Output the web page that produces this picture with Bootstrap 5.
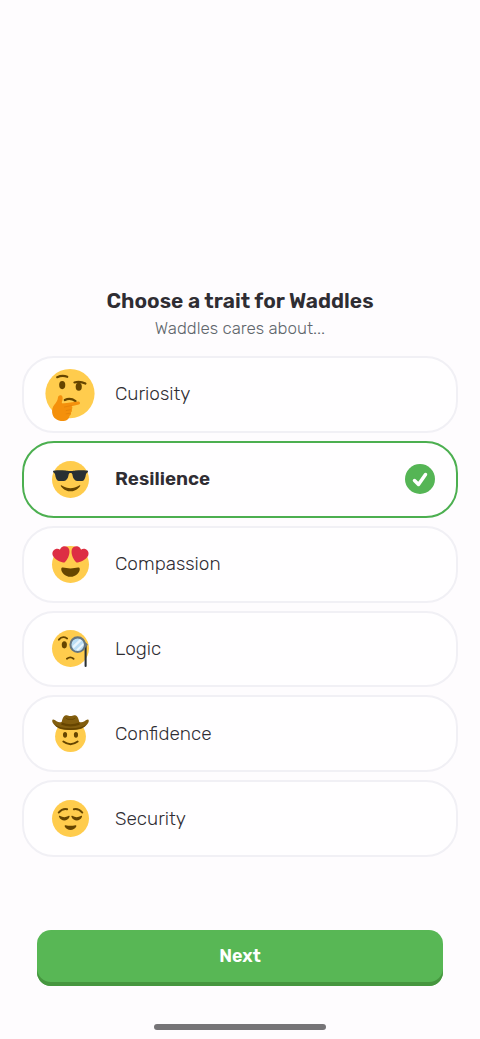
<!DOCTYPE html>
<html lang="en">
<head>
<meta charset="utf-8">
<meta name="viewport" content="width=device-width, initial-scale=1">
<title>Choose a trait</title>
<link href="https://cdn.jsdelivr.net/npm/bootstrap@5.3.0/dist/css/bootstrap.min.css" rel="stylesheet">
<style>
  body { background: #fefcfe; color: #2f2d33; font-family: Rubik, Inter, "Liberation Sans", sans-serif; }
  .screen { padding: 286px 22px 9px; }
  .screen-title { font-size: 21px; line-height: 30px; font-weight: 650; }
  .screen-sub { font-size: 17px; line-height: 24px; font-weight: 300; color: #60666c; }
  .trait-list { display: grid; grid-auto-rows: 1fr; min-height: 501px; margin-top: 16px; }
  .trait { background: #fffeff; border: 2px solid #f1f0f5; border-radius: 32px; padding: 0 21px; font-size: 19px; line-height: 24px; font-weight: 350; cursor: pointer; }
  .trait-icon { width: 50px; height: 50px; margin-right: 20px; }
  .trait-icon svg { width: 37px; height: 37px; overflow: visible; }
  .trait-icon .large { width: 50px; height: 50px; }
  .tick { width: 30px; height: 30px; display: none; }
  .btn-check:checked + .trait { border-color: #4caf50; font-weight: 600; }
  .btn-check:checked + .trait .tick { display: block; }
  .btn-check:focus-visible + .trait { outline: 2px solid #2f2d33; }
  .btn-next, .btn-next:hover, .btn-next:active { background: #58b755; color: #fff; }
  .btn-next { border: 0; border-radius: 14px; box-shadow: inset 0 -4px #46963f; font-size: 18px; line-height: 24px; font-weight: 600; padding: 14px 16px 18px; }
  .footer-bar { padding: 0 15px; }
  .home-bar { width: 172px; height: 6px; border-radius: 3px; background: #767477; margin-top: 38px; }
</style>
</head>
<body>
<main class="screen min-vh-100 d-flex flex-column">
  <header class="text-center">
    <h1 class="screen-title mb-0">Choose a trait for Waddles</h1>
    <p class="screen-sub mb-0">Waddles cares about...</p>
  </header>

  <form class="d-flex flex-column flex-grow-1">
    <div class="trait-list gap-2" role="radiogroup" aria-label="Trait">
      <div class="d-flex">
        <input class="btn-check" type="radio" name="trait" id="curiosity">
        <label class="trait d-flex align-items-center w-100" for="curiosity">
          <span class="trait-icon d-flex align-items-center justify-content-center">
            <svg class="large" viewBox="0 0 36 36" aria-hidden="true">
              <circle cx="18" cy="17.700" r="17.700" fill="#ffcc4d"/>
              <ellipse cx="12.400" cy="11.600" rx="2.200" ry="2.900" fill="#664500"/>
              <ellipse cx="24.300" cy="12.800" rx="2.200" ry="2.900" fill="#664500"/>
              <path d="M8.800 5.900q3.700-1.700 7.200-.3M21.200 9.700q4-1.200 7.900.8M14.300 22.300q3.900-1.900 7.700.8" fill="none" stroke="#664500" stroke-width="1.600" stroke-linecap="round"/>
              <path fill="#f4900c" d="M11 18.900c1.100-.2 1.700.7 1.700 2.100 0 1.600-.7 2.500-.6 3.300.2.700 1 .5 2 .4l9.800-1.300c1.500-.1 1.800 1.900.4 2.200l-5.200 1.200c1 .5.7 1.800 0 2.200.6.8.3 1.900-.5 2.400.5 1-.1 2-1 2.500-.3 3.100-3.600 4-6.200 3.500-3.900-.5-6.500-3.300-6.300-7.300.1-2.300 1-3.800 2.500-5.500 1.100-1.300 1.500-2.300 1.700-3.900.1-1 .8-1.700 1.700-1.800z"/>
              <path d="m14 27.400 5-1.100M15.300 29.900l3.600-.7M15.200 32.300l3-.5" fill="none" stroke="#e07f08" stroke-width=".5" stroke-linecap="round"/>
            </svg>
          </span>
          <span class="flex-grow-1">Curiosity</span>
          <svg class="tick" viewBox="0 0 30 30" aria-hidden="true"><circle cx="15" cy="15" r="15" fill="#55b555"/><path d="m9.500 16.500 4 4 7-10" fill="none" stroke="#fff" stroke-width="3.500" stroke-linecap="round" stroke-linejoin="round"/></svg>
        </label>
      </div>

      <div class="d-flex">
        <input class="btn-check" type="radio" name="trait" id="resilience" checked>
        <label class="trait d-flex align-items-center w-100" for="resilience">
          <span class="trait-icon d-flex align-items-center justify-content-center">
            <svg viewBox="0 0 36 36" aria-hidden="true">
              <circle cx="18" cy="18" r="18" fill="#ffcc4d"/>
              <path fill="#292f33" d="M1.240 11.018c.24.239 1.438.957 1.677 1.675.24.717.72 4.784 2.158 5.981 1.483 1.232 7.077.774 8.148.24 2.397-1.195 2.691-4.531 3.115-6.221.239-.957 1.677-.957 1.677-.957s1.438 0 1.678.956c.424 1.691.72 5.027 3.115 6.221 1.072.535 6.666.994 8.151-.238 1.436-1.197 1.915-5.264 2.155-5.983.238-.717 1.438-1.435 1.677-1.674.241-.239.241-1.196 0-1.436-.479-.478-6.134-.904-12.223-.239-1.215.133-1.677.478-4.554.478-2.875 0-3.339-.346-4.553-.478-6.085-.666-11.741-.24-12.221.239-.239.239-.239 1.197 0 1.436z"/>
              <path fill="#664500" d="M27.335 23.629c-.178-.161-.444-.171-.635-.029-.039.029-3.922 2.900-8.700 2.900-4.766 0-8.662-2.871-8.700-2.900-.191-.142-.457-.13-.635.029-.177.16-.217.424-.094.628C8.700 24.472 11.788 29.500 18 29.500s9.301-5.028 9.429-5.243c.123-.205.084-.468-.094-.628z"/>
            </svg>
          </span>
          <span class="flex-grow-1">Resilience</span>
          <svg class="tick" viewBox="0 0 30 30" aria-hidden="true"><circle cx="15" cy="15" r="15" fill="#55b555"/><path d="m9.500 16.500 4 4 7-10" fill="none" stroke="#fff" stroke-width="3.500" stroke-linecap="round" stroke-linejoin="round"/></svg>
        </label>
      </div>

      <div class="d-flex">
        <input class="btn-check" type="radio" name="trait" id="compassion">
        <label class="trait d-flex align-items-center w-100" for="compassion">
          <span class="trait-icon d-flex align-items-center justify-content-center">
            <svg viewBox="0 0 36 36" aria-hidden="true">
              <circle cx="18" cy="18" r="18" fill="#ffcc4d"/>
              <path fill="#664500" d="M18 21.849c-2.966 0-4.935-.346-7.369-.819-.557-.106-1.638 0-1.638 1.638 0 3.275 3.763 7.369 9.007 7.369s9.007-4.094 9.007-7.369c0-1.638-1.082-1.745-1.638-1.638-2.434.473-4.402.819-7.369.819"/>
              <path fill="#dd2e44" d="M16.650 3.281C15.791.85 13.126-.426 10.694.431c-1.476.52-2.521 1.711-2.928 3.104-1.191-.829-2.751-1.100-4.225-.58C1.111 3.813-.167 6.480.692 8.911c.122.344.284.663.472.958 1.951 3.582 7.588 6.100 11.001 6.131 2.637-2.167 5.446-7.665 4.718-11.677-.038-.348-.113-.698-.233-1.042zm2.700 0C20.209.85 22.875-.426 25.306.431c1.476.52 2.521 1.711 2.929 3.104 1.191-.829 2.751-1.100 4.225-.58 2.430.858 3.707 3.525 2.850 5.956-.123.344-.284.663-.473.958-1.951 3.582-7.588 6.100-11.002 6.131-2.637-2.167-5.445-7.665-4.717-11.677.037-.348.112-.698.232-1.042z"/>
            </svg>
          </span>
          <span class="flex-grow-1">Compassion</span>
          <svg class="tick" viewBox="0 0 30 30" aria-hidden="true"><circle cx="15" cy="15" r="15" fill="#55b555"/><path d="m9.500 16.500 4 4 7-10" fill="none" stroke="#fff" stroke-width="3.500" stroke-linecap="round" stroke-linejoin="round"/></svg>
        </label>
      </div>

      <div class="d-flex">
        <input class="btn-check" type="radio" name="trait" id="logic">
        <label class="trait d-flex align-items-center w-100" for="logic">
          <span class="trait-icon d-flex align-items-center justify-content-center">
            <svg viewBox="0 0 36 36" aria-hidden="true">
              <circle cx="18" cy="18" r="18" fill="#ffcc4d"/>
              <ellipse cx="12" cy="14.400" rx="2.500" ry="3.500" fill="#664500"/>
              <path d="M6.700 9.400q3.300-4.200 8-1.200M14.500 27.900q3.400-2.600 6.500.1" fill="none" stroke="#664500" stroke-width="1.800" stroke-linecap="round"/>
              <path d="M32.700 14v21" stroke="#292f33" stroke-width="2" stroke-linecap="round"/>
              <circle cx="25" cy="14.300" r="7.100" fill="#bbddf5" stroke="#66757f" stroke-width="2"/>
              <path fill="#eaf5fd" d="m20 15.500 7-6.600 2 1.300-8 7.900zM23.500 19.200l6.800-6.500.5 2-5.500 5.400z"/>
              <path fill="#66757f" d="m32 11.500 3 2.800-3 2.900z"/>
            </svg>
          </span>
          <span class="flex-grow-1">Logic</span>
          <svg class="tick" viewBox="0 0 30 30" aria-hidden="true"><circle cx="15" cy="15" r="15" fill="#55b555"/><path d="m9.500 16.500 4 4 7-10" fill="none" stroke="#fff" stroke-width="3.500" stroke-linecap="round" stroke-linejoin="round"/></svg>
        </label>
      </div>

      <div class="d-flex">
        <input class="btn-check" type="radio" name="trait" id="confidence">
        <label class="trait d-flex align-items-center w-100" for="confidence">
          <span class="trait-icon d-flex align-items-center justify-content-center">
            <svg viewBox="0 0 36 36" aria-hidden="true">
              <circle cx="18" cy="20.900" r="15" fill="#ffcc4d"/>
              <ellipse cx="12.700" cy="19.300" rx="2" ry="2.800" fill="#664500"/>
              <ellipse cx="23.300" cy="19.300" rx="2" ry="2.800" fill="#664500"/>
              <path d="M11 25.800q7 5.200 14 0" fill="none" stroke="#664500" stroke-width="1.800" stroke-linecap="round"/>
              <path fill="#825d0e" d="M.4 4.800c1-1 2.200.1 4 1.300 1.500.9 3.200 1.200 5 .7C10.300 3.500 11 .8 13.600.3c1.700-.4 2.800.7 4.400.7s2.700-1.100 4.400-.7c2.600.5 3.300 3.200 4.200 6.500 1.800.5 3.500.2 5-.7 1.800-1.200 3-2.300 4-1.300.8 1-.5 3.400-2.500 5.400-3.200 3.200-6.600 4.400-15.100 4.400S6.100 13.400 2.900 10.200C.9 8.200-.4 5.800.4 4.800z"/>
              <path d="M9.500 7.300q8.500 3.500 17 0l.5 2.200q-9 3.500-18 0zM2 8.800q5 4.200 16 4.200t16-4.200q-4 5.800-16 5.800T2 8.800z" fill="#664500"/>
              <path d="m13.500 3 2 1.200h5l2-1.200" fill="none" stroke="#664500" stroke-width=".8" stroke-linecap="round"/>
            </svg>
          </span>
          <span class="flex-grow-1">Confidence</span>
          <svg class="tick" viewBox="0 0 30 30" aria-hidden="true"><circle cx="15" cy="15" r="15" fill="#55b555"/><path d="m9.500 16.500 4 4 7-10" fill="none" stroke="#fff" stroke-width="3.500" stroke-linecap="round" stroke-linejoin="round"/></svg>
        </label>
      </div>

      <div class="d-flex">
        <input class="btn-check" type="radio" name="trait" id="security">
        <label class="trait d-flex align-items-center w-100" for="security">
          <span class="trait-icon d-flex align-items-center justify-content-center">
            <svg viewBox="0 0 36 36" aria-hidden="true">
              <circle cx="18" cy="18" r="18" fill="#ffcc4d"/>
              <path d="M6.500 12.300q3.800-4.500 8.300-3.300M21.200 9q4.500-1.200 8.300 3.300" fill="none" stroke="#664500" stroke-width="1.800" stroke-linecap="round"/>
              <path fill="#664500" d="M6.800 16.200c-.3-.8.6-1 1.200-.6 2.300 1.500 5.600 1.500 7.900 0 .7-.4 1.500-.1 1.200.6-2 4.900-8.200 4.900-10.300 0zM18.900 16.200c-.3-.8.6-1 1.200-.6 2.300 1.500 5.600 1.500 7.900 0 .7-.4 1.500-.1 1.200.6-2 4.900-8.200 4.900-10.300 0zM13.300 24.500c3 .7 6.400.7 9.400 0 .9-.2 1.200.5.9 1.300-2 4.400-9.200 4.400-11.200 0-.3-.8 0-1.500.9-1.300z"/>
            </svg>
          </span>
          <span class="flex-grow-1">Security</span>
          <svg class="tick" viewBox="0 0 30 30" aria-hidden="true"><circle cx="15" cy="15" r="15" fill="#55b555"/><path d="m9.500 16.500 4 4 7-10" fill="none" stroke="#fff" stroke-width="3.500" stroke-linecap="round" stroke-linejoin="round"/></svg>
        </label>
      </div>
    </div>

    <div class="footer-bar mt-auto">
      <button type="submit" class="btn btn-next d-block w-100">Next</button>
      <div class="home-bar mx-auto"></div>
    </div>
  </form>
</main>
<script src="https://cdn.jsdelivr.net/npm/bootstrap@5.3.0/dist/js/bootstrap.bundle.min.js"></script>
</body>
</html>
